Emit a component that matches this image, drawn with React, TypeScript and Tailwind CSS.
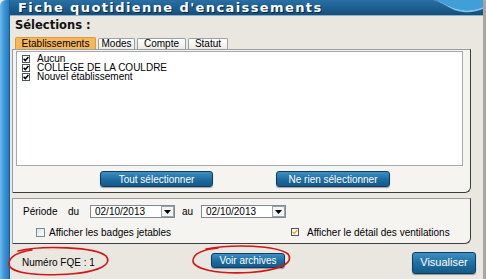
import React from "react";

function Box({ checked, tone }: { checked?: boolean; tone?: "black" | "yellow" }) {
  return (
    <span className="inline-flex items-center justify-center w-[8px] h-[8px] border border-[#4a5560] bg-white shrink-0">
      {checked && (
        <svg width="6" height="6" viewBox="0 0 6 6">
          <path
            d="M0.6 2.8 L2.3 4.6 L5.4 1.1"
            stroke={tone === "yellow" ? "#e2b21c" : "#000"}
            strokeWidth="1.5"
            fill="none"
          />
        </svg>
      )}
    </span>
  );
}

function BlueButton({ label, className }: { label: string; className: string }) {
  return (
    <div
      className={
        "flex items-center justify-center rounded-[3px] border border-[#0c3d62] bg-gradient-to-b from-[#3f8fc2] via-[#1f6ea2] to-[#135a88] text-white shadow-[0_1px_1px_rgba(0,0,0,0.35)] " +
        className
      }
    >
      {label}
    </div>
  );
}

function DateField() {
  return (
    <div className="flex items-center h-[13px] border border-[#7f8a94] bg-white">
      <span className="pl-[4px] w-[70px] leading-[11px]">02/10/2013</span>
      <span className="flex items-center justify-center w-[13px] h-[11px] border border-[#9aa2aa] bg-[#f3f3f3]">
        <svg width="7" height="4" viewBox="0 0 7 4">
          <path d="M0 0 H7 L3.5 4 Z" fill="#000" />
        </svg>
      </span>
    </div>
  );
}

export default function App() {
  return (
    <div className="relative w-[486px] h-[279px] overflow-hidden flex bg-[#e9e7e0] font-['Liberation_Sans',Arial,sans-serif] text-[10px] text-black">
      {/* left frame */}
      <div className="w-[10px] h-full rounded-tl-[6px] bg-gradient-to-r from-[#6cb9ec] via-[#3b93d6] to-[#2479bf] border-r border-[#1a5d94]" />

      {/* main column */}
      <div className="flex-1 flex flex-col border-r-[3px] border-[#a8a6a0]">
        {/* title bar */}
        <div className="relative h-[16px] bg-gradient-to-b from-[#2a6fa3] via-[#1d6092] to-[#164f7b] border-b border-[#8fb3cc] overflow-hidden">
          <svg className="absolute right-0 top-0" width="50" height="16" viewBox="0 0 50 16">
            <path d="M0 0 C12 2, 18 9, 30 10 C38 11, 44 9, 50 7 V0 Z" fill="#3f9fd6" />
            <path d="M0 0 C12 3, 18 11, 30 12 C38 13, 44 11, 50 9 V7 C44 9, 38 11, 30 10 C18 9, 12 2, 0 0 Z" fill="#7cc4ea" />
          </svg>
          <div className="relative pl-[8px] leading-[15px] font-['DejaVu_Sans',Verdana,sans-serif] font-bold text-[13px] tracking-[1.4px] text-white [text-shadow:1px_1px_0_#0a2740]">
            Fiche quotidienne d'encaissements
          </div>
        </div>

        {/* content */}
        <div className="flex-1 flex flex-col pl-[2px]">
          <div className="pr-[12px]">
            <div className="pt-[3px] pl-[3px] leading-[13px] font-['DejaVu_Sans',Verdana,sans-serif] font-bold text-[11.5px] text-[#111]">
              Sélections :
            </div>

            {/* tabs */}
            <div className="mt-[5px] flex items-end gap-[2px] pl-[3px] h-[12px] relative z-10">
              <div className="w-[81px] h-[12px] flex items-center justify-center bg-[#f7b65a] border border-[#e09a38] border-b-0 rounded-t-[2px] leading-[11px]">
                Etablissements
              </div>
              <div className="w-[37px] h-[11px] flex items-center justify-center bg-gradient-to-b from-white to-[#ecebe5] border border-[#9aa0a4] border-b-0 rounded-t-[2px] leading-[10px]">
                Modes
              </div>
              <div className="w-[49px] h-[11px] flex items-center justify-center bg-gradient-to-b from-white to-[#ecebe5] border border-[#9aa0a4] border-b-0 rounded-t-[2px] leading-[10px]">
                Compte
              </div>
              <div className="w-[40px] h-[11px] flex items-center justify-center bg-gradient-to-b from-white to-[#ecebe5] border border-[#9aa0a4] border-b-0 rounded-t-[2px] leading-[10px]">
                Statut
              </div>
            </div>

            {/* tab panel */}
            <div className="h-[144px] flex flex-col border border-[#9b9d9e] border-r-[#3d3d3d] border-b-[#3d3d3d] rounded-br-[6px] bg-[#f5f4f1]">
              <div className="mt-[1px] ml-[3px] mr-[7px] h-[115px] border border-[#a4a9ad] bg-white pt-[2px] pl-[5px]">
                <div className="flex items-center h-[9px] gap-[7px] leading-[9px]">
                  <Box checked />
                  <span>Aucun</span>
                </div>
                <div className="flex items-center h-[9px] gap-[7px] leading-[9px]">
                  <Box checked />
                  <span>COLLEGE DE LA COULDRE</span>
                </div>
                <div className="flex items-center h-[9px] gap-[7px] leading-[9px]">
                  <Box checked />
                  <span>Nouvel établissement</span>
                </div>
              </div>
              <div className="mt-[5px] flex gap-[63px] pl-[87px] text-[10px]">
                <BlueButton label="Tout sélectionner" className="w-[113px] h-[16px]" />
                <BlueButton label="Ne rien sélectionner" className="w-[114px] h-[16px]" />
              </div>
            </div>

            {/* period box */}
            <div className="mt-[5px] h-[46px] flex flex-col border border-[#9b9d9e] border-r-[#3d3d3d] border-b-[#3d3d3d] rounded-br-[6px] bg-[#f5f4f1]">
              <div className="mt-[6px] flex items-center h-[13px] pl-[10px]">
                <span className="w-[45px]">Période</span>
                <span className="w-[22px]">du</span>
                <DateField />
                <span className="ml-[7px] w-[19px]">au</span>
                <DateField />
              </div>
              <div className="mt-[9px] flex items-center h-[10px]">
                <div className="flex items-center gap-[4px] pl-[23px] w-[278px]">
                  <span className="inline-flex w-[9px] h-[9px] border border-[#7d8a96] bg-gradient-to-br from-[#dfe3e8] to-white" />
                  <span>Afficher les badges jetables</span>
                </div>
                <div className="flex items-center gap-[8px]">
                  <Box checked tone="yellow" />
                  <span>Afficher le détail des ventilations</span>
                </div>
              </div>
            </div>
          </div>

          {/* bottom row */}
          <div className="flex-1 flex items-center pr-[7px]">
            <span className="pl-[10px] w-[199px] pt-[1px]">Numéro FQE : 1</span>
            <BlueButton label="Voir archives" className="w-[74px] h-[15px] mt-[-3px] text-[10px]" />
            <div className="flex-1" />
            <BlueButton label="Visualiser" className="w-[64px] h-[22px] mt-[2px] text-[11px]" />
          </div>
        </div>
      </div>

      {/* red hand-drawn annotations */}
      <svg className="absolute inset-0 pointer-events-none" width="486" height="279" viewBox="0 0 486 279">
        <path
          d="M18 251 C42 245, 96 247, 106 256 C113 264, 100 273, 60 274.5 C26 276, 8 271, 9 263 C10 256, 18 252, 32 250"
          stroke="#d41515"
          strokeWidth="1.6"
          fill="none"
          strokeLinecap="round"
        />
        <path
          d="M206 249 C232 244, 276 245, 288 254 C294 262, 283 270, 250 272.5 C216 274.5, 192 268.5, 193 260 C194 253, 203 249.5, 218 248"
          stroke="#d41515"
          strokeWidth="1.6"
          fill="none"
          strokeLinecap="round"
        />
      </svg>
    </div>
  );
}
